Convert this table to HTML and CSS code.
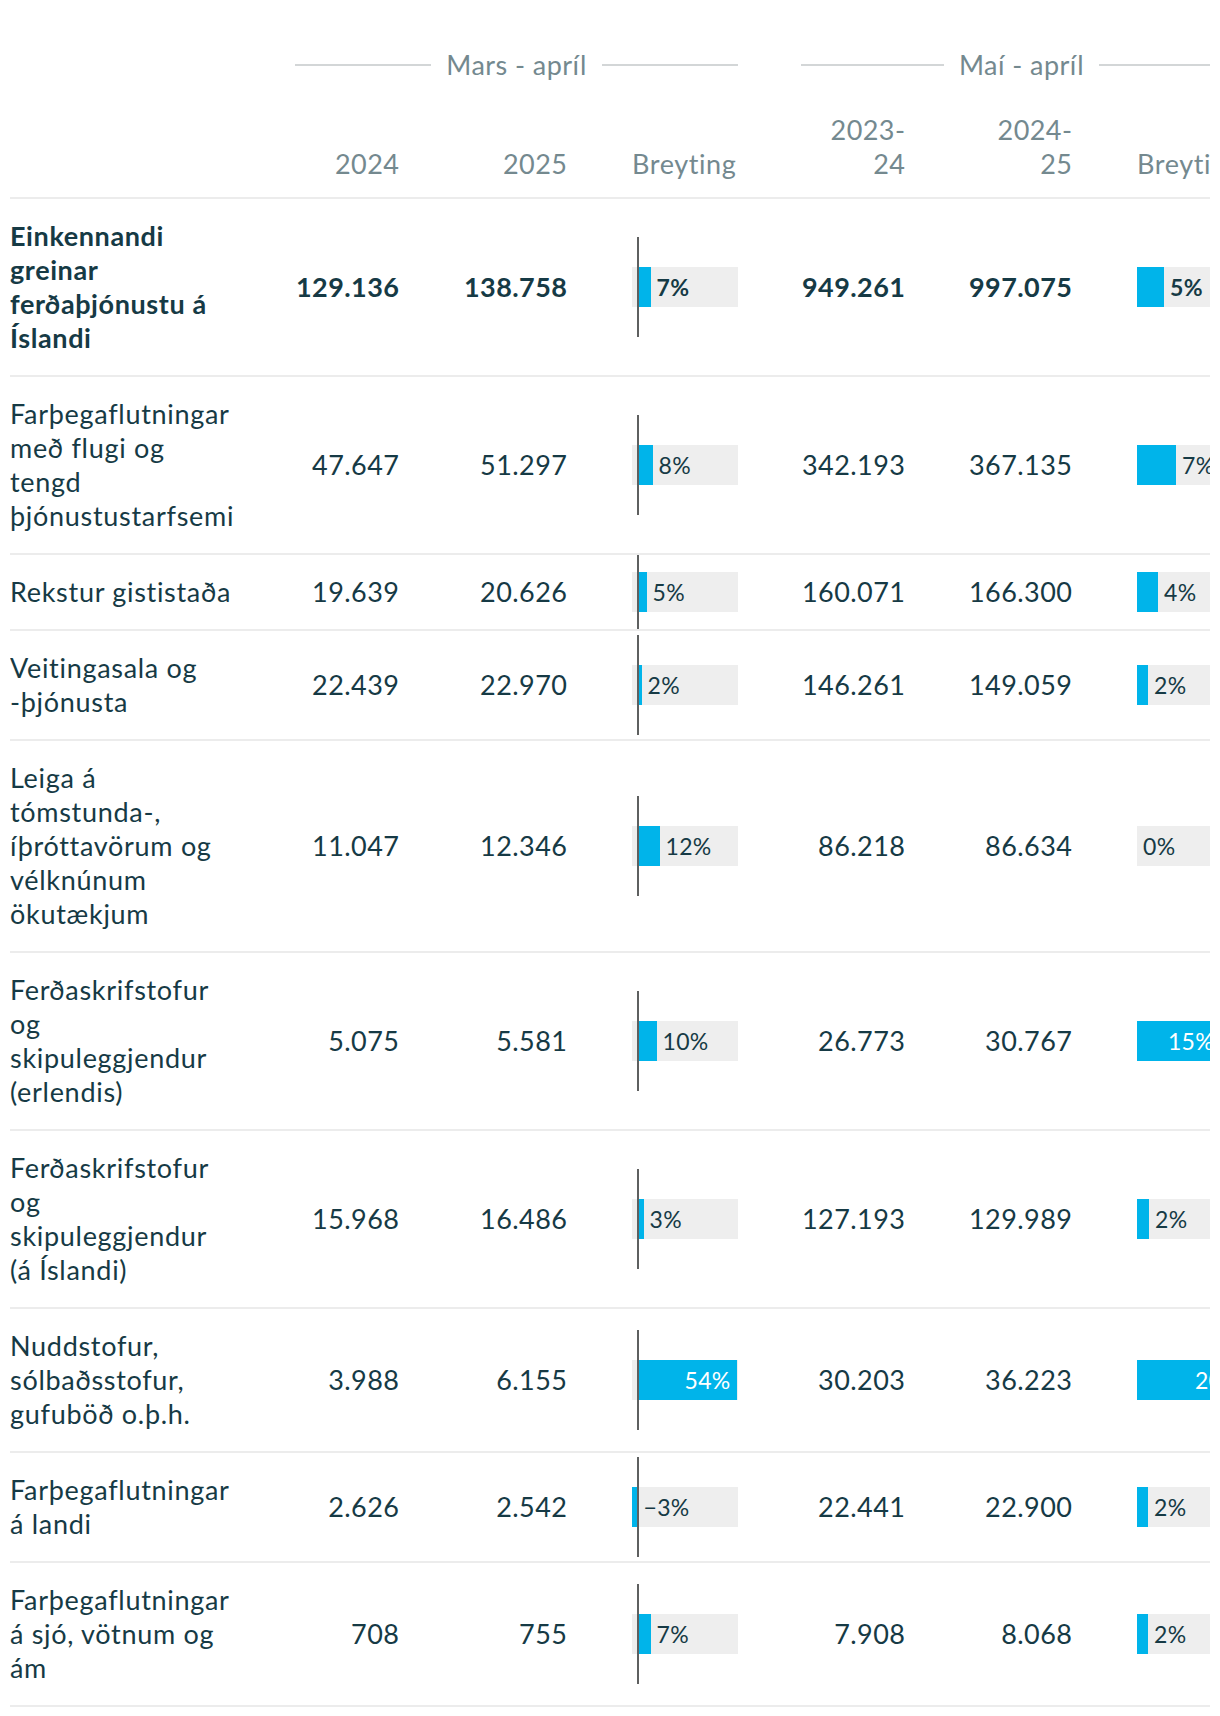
FILE: index.html
```html
<!DOCTYPE html>
<html lang="is">
<head>
<meta charset="utf-8">
<title>Ferðaþjónusta</title>
<link rel="stylesheet" href="styles.css">
</head>
<body>
<div class="wrap">
  <div class="grid groups">
    <div class="group g1"><span>Mars - apríl</span></div>
    <div class="group g2"><span>Maí - apríl</span></div>
  </div>
  <div class="grid head">
    <div class="hcell"></div>
    <div class="hcell hnum">2024</div>
    <div class="hcell hnum">2025</div>
    <div class="hcell chg">Breyting</div>
    <div class="hcell hnum"><span class="narrow">2023-24</span></div>
    <div class="hcell hnum"><span class="narrow">2024-25</span></div>
    <div class="hcell chg">Breyting</div>
  </div>

  <div class="grid row total">
    <div class="cell label">Einkennandi greinar ferðaþjónustu á Íslandi</div>
    <div class="cell num">129.136</div>
    <div class="cell num">138.758</div>
    <div class="barcell"><div class="bar"><span class="zero"></span><span class="fill" style="width:13px"></span><span class="pct">7%</span><span class="axis"></span></div></div>
    <div class="cell num">949.261</div>
    <div class="cell num">997.075</div>
    <div class="barcell"><div class="bar"><span class="fill" style="width:27px"></span><span class="pct">5%</span></div></div>
  </div>

  <div class="grid row">
    <div class="cell label">Farþegaflutningar með flugi og tengd þjónustustarfsemi</div>
    <div class="cell num">47.647</div>
    <div class="cell num">51.297</div>
    <div class="barcell"><div class="bar"><span class="zero"></span><span class="fill" style="width:15px"></span><span class="pct">8%</span><span class="axis"></span></div></div>
    <div class="cell num">342.193</div>
    <div class="cell num">367.135</div>
    <div class="barcell"><div class="bar"><span class="fill" style="width:39px"></span><span class="pct">7%</span></div></div>
  </div>

  <div class="grid row">
    <div class="cell label">Rekstur gististaða</div>
    <div class="cell num">19.639</div>
    <div class="cell num">20.626</div>
    <div class="barcell"><div class="bar"><span class="zero"></span><span class="fill" style="width:9px"></span><span class="pct">5%</span><span class="axis"></span></div></div>
    <div class="cell num">160.071</div>
    <div class="cell num">166.300</div>
    <div class="barcell"><div class="bar"><span class="fill" style="width:21px"></span><span class="pct">4%</span></div></div>
  </div>

  <div class="grid row">
    <div class="cell label">Veitingasala og -þjónusta</div>
    <div class="cell num">22.439</div>
    <div class="cell num">22.970</div>
    <div class="barcell"><div class="bar"><span class="zero"></span><span class="fill" style="width:4px"></span><span class="pct">2%</span><span class="axis"></span></div></div>
    <div class="cell num">146.261</div>
    <div class="cell num">149.059</div>
    <div class="barcell"><div class="bar"><span class="fill" style="width:11px"></span><span class="pct">2%</span></div></div>
  </div>

  <div class="grid row">
    <div class="cell label">Leiga á tómstunda-, íþróttavörum og vélknúnum ökutækjum</div>
    <div class="cell num">11.047</div>
    <div class="cell num">12.346</div>
    <div class="barcell"><div class="bar"><span class="zero"></span><span class="fill" style="width:22px"></span><span class="pct">12%</span><span class="axis"></span></div></div>
    <div class="cell num">86.218</div>
    <div class="cell num">86.634</div>
    <div class="barcell"><div class="bar"><span class="fill" style="width:0px"></span><span class="pct">0%</span></div></div>
  </div>

  <div class="grid row">
    <div class="cell label">Ferðaskrifstofur og skipuleggjendur (erlendis)</div>
    <div class="cell num">5.075</div>
    <div class="cell num">5.581</div>
    <div class="barcell"><div class="bar"><span class="zero"></span><span class="fill" style="width:19px"></span><span class="pct">10%</span><span class="axis"></span></div></div>
    <div class="cell num">26.773</div>
    <div class="cell num">30.767</div>
    <div class="barcell"><div class="bar"><span class="fill inside" style="width:83px"><span class="pct in">15%</span></span></div></div>
  </div>

  <div class="grid row">
    <div class="cell label">Ferðaskrifstofur og skipuleggjendur (á Íslandi)</div>
    <div class="cell num">15.968</div>
    <div class="cell num">16.486</div>
    <div class="barcell"><div class="bar"><span class="zero"></span><span class="fill" style="width:6px"></span><span class="pct">3%</span><span class="axis"></span></div></div>
    <div class="cell num">127.193</div>
    <div class="cell num">129.989</div>
    <div class="barcell"><div class="bar"><span class="fill" style="width:12px"></span><span class="pct">2%</span></div></div>
  </div>

  <div class="grid row">
    <div class="cell label">Nuddstofur, sólbaðsstofur, gufuböð o.þ.h.</div>
    <div class="cell num">3.988</div>
    <div class="cell num">6.155</div>
    <div class="barcell"><div class="bar"><span class="zero"></span><span class="fill inside" style="width:99px"><span class="pct in">54%</span></span><span class="axis"></span></div></div>
    <div class="cell num">30.203</div>
    <div class="cell num">36.223</div>
    <div class="barcell"><div class="bar"><span class="fill inside" style="width:110px"><span class="pct in">20%</span></span></div></div>
  </div>

  <div class="grid row">
    <div class="cell label">Farþegaflutningar á landi</div>
    <div class="cell num">2.626</div>
    <div class="cell num">2.542</div>
    <div class="barcell"><div class="bar"><span class="zero neg"></span><span class="pct">−3%</span><span class="axis"></span></div></div>
    <div class="cell num">22.441</div>
    <div class="cell num">22.900</div>
    <div class="barcell"><div class="bar"><span class="fill" style="width:11px"></span><span class="pct">2%</span></div></div>
  </div>

  <div class="grid row">
    <div class="cell label">Farþegaflutningar á sjó, vötnum og ám</div>
    <div class="cell num">708</div>
    <div class="cell num">755</div>
    <div class="barcell"><div class="bar"><span class="zero"></span><span class="fill" style="width:13px"></span><span class="pct">7%</span><span class="axis"></span></div></div>
    <div class="cell num">7.908</div>
    <div class="cell num">8.068</div>
    <div class="barcell"><div class="bar"><span class="fill" style="width:11px"></span><span class="pct">2%</span></div></div>
  </div>
</div>
</body>
</html>
```

FILE: styles.css
```css
html, body {
  margin: 0;
  padding: 0;
  background: #ffffff;
}

body {
  font-family: Lato, "Noto Sans", "Liberation Sans", sans-serif;
  color: #163a45;
  font-size: 27px;
  line-height: 34px;
  letter-spacing: 0.45px;
}

.wrap {
  width: 1200px;
  margin-left: 10px;
  overflow: hidden;
}

.grid {
  display: grid;
  grid-template-columns: 225px 164px 168px 171px 167px 167px 170px;
  width: 1232px;
}

/* group headers */
.groups {
  padding-top: 48px;
}

.group {
  display: flex;
  align-items: center;
  gap: 15px;
  color: #74898f;
  white-space: nowrap;
}

.group::before,
.group::after {
  content: "";
  flex: 1;
  height: 2px;
  background: #d3d6d7;
}

.g1 {
  grid-column: 2 / span 3;
  padding-left: 60px;
}

.g2 {
  grid-column: 5 / span 3;
  padding-left: 63px;
}

/* column headers */
.head {
  padding-top: 30.5px;
  padding-bottom: 16px;
  border-bottom: 2px solid #ececec;
  align-items: end;
  color: #74898f;
}

.hnum {
  text-align: right;
  margin-right: -0.45px;
}

.narrow {
  display: inline-block;
  max-width: 80px;
}

.chg {
  padding-left: 65px;
  white-space: nowrap;
  letter-spacing: 0.6px;
}

/* body rows */
.row {
  border-bottom: 2px solid #ececec;
}

.cell {
  padding: 20px 0;
}

.label {
  padding-right: 3px;
  letter-spacing: 0.7px;
}

.num {
  text-align: right;
  align-self: center;
  margin-right: -0.45px;
}

.total .label,
.total .num,
.total .pct {
  font-weight: 700;
}

.total .label {
  letter-spacing: 0.6px;
}

/* bars */
.barcell {
  align-self: stretch;
  display: flex;
  align-items: center;
  padding-left: 65px;
  overflow: hidden;
}

.bar {
  position: relative;
  display: flex;
  align-items: center;
  width: 106px;
  height: 40px;
  flex: none;
  background: #eeeeee;
}

.zero {
  width: 5.6px;
  height: 40px;
  flex: none;
}

.zero.neg {
  background: #00b4ea;
}

.fill {
  height: 40px;
  flex: none;
  background: #00b4ea;
}

.fill.inside {
  display: flex;
  align-items: center;
  justify-content: flex-end;
  padding-right: 6px;
  box-sizing: border-box;
}

.pct {
  font-size: 23px;
  line-height: 40px;
  margin-left: 6px;
  white-space: nowrap;
  color: #163a45;
  letter-spacing: 0.3px;
}

.pct.in {
  margin-left: 0;
  color: #ffffff;
}

.axis {
  position: absolute;
  left: 4.6px;
  top: 50%;
  width: 2px;
  height: 100px;
  transform: translateY(-50%);
  background: #5e6060;
}
```
